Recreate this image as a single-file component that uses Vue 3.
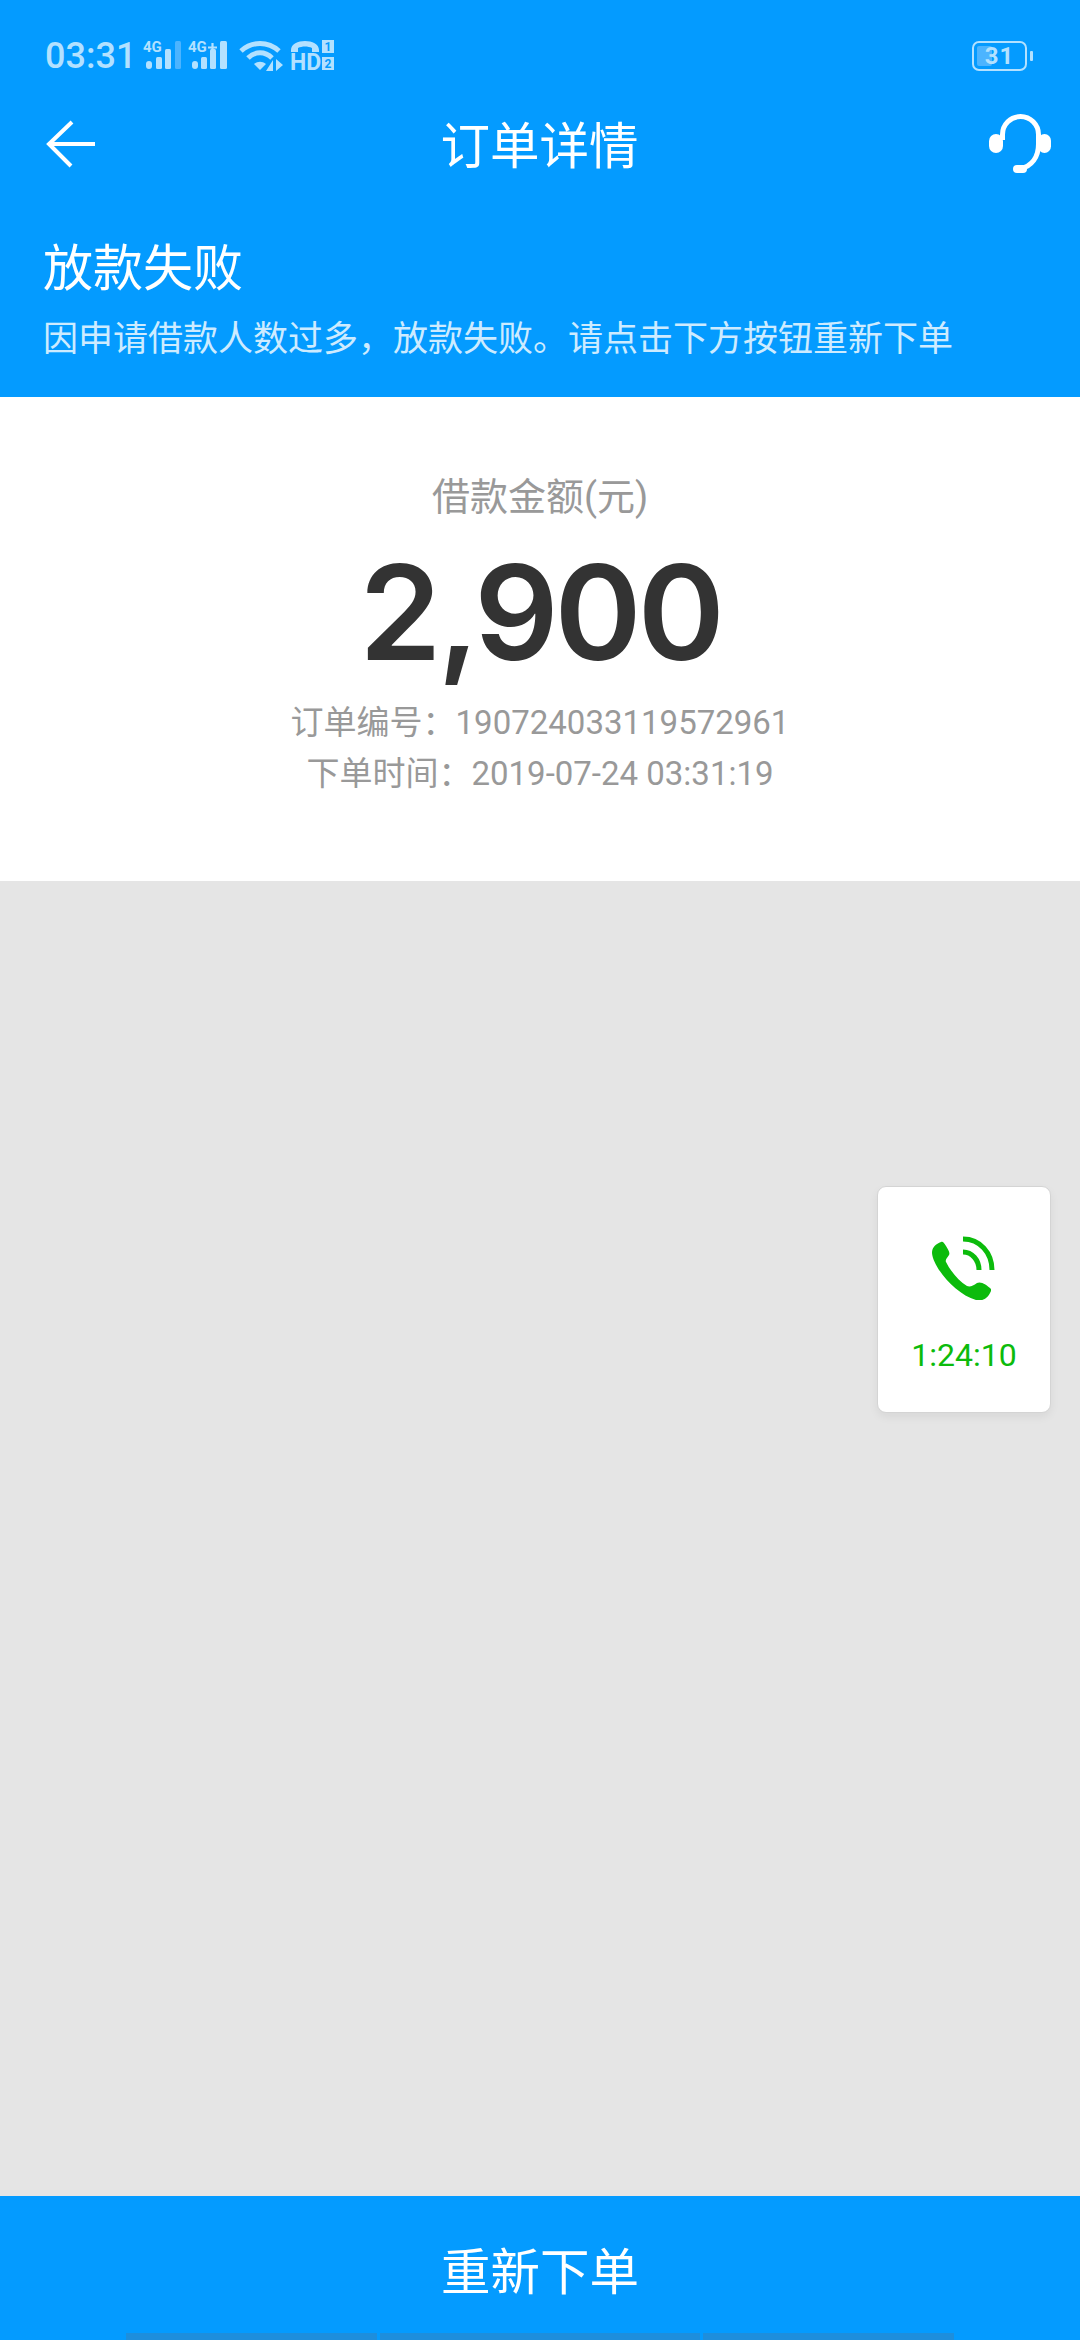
<template>
  <div class="page">
    <header class="top">
      <div class="status-bar">
        <span class="time">03:31</span>
        <svg class="signal" width="40" height="30" viewBox="0 0 40 30">
          <text x="0" y="11" class="net">4G</text>
          <rect x="3" y="20" width="6" height="8" rx="3" fill="#b3e1ff" />
          <rect x="13" y="16" width="6" height="12" rx="1.5" fill="#b3e1ff" />
          <rect x="22" y="8" width="6" height="20" rx="1.5" fill="#b3e1ff" />
          <rect x="32" y="0" width="6" height="28" rx="1.5" fill="#4cb4ff" />
        </svg>
        <svg class="signal" width="42" height="30" viewBox="0 0 42 30">
          <text x="0" y="11" class="net">4G</text>
          <path d="M20 6.5h9M24.5 2v9" stroke="#b3e1ff" stroke-width="2.2" />
          <rect x="4" y="20" width="6" height="8" rx="3" fill="#b3e1ff" />
          <rect x="13" y="16" width="6" height="12" rx="1.5" fill="#b3e1ff" />
          <rect x="22" y="8" width="6" height="20" rx="1.5" fill="#b3e1ff" />
          <rect x="32" y="0" width="7" height="28" rx="1.5" fill="#b3e1ff" />
        </svg>
        <svg class="wifi" width="44" height="30" viewBox="0 0 44 30">
          <path d="M1 10C12 0 28 0 39 10" fill="none" stroke="#b3e1ff" stroke-width="5" />
          <path d="M8 17C15 10 25 10 32 17" fill="none" stroke="#b3e1ff" stroke-width="5" />
          <path d="M14 23C18 20 22 20 26 23L20 29Z" fill="#b3e1ff" />
          <path d="M33 19V30H26ZM36 18L43 24L36 30Z" fill="#b3e1ff" />
        </svg>
        <svg class="hd" width="46" height="32" viewBox="0 0 46 32">
          <path d="M1 10C1 -2 29 -2 29 10V12H22V8C18 6 12 6 8 8V12H1Z" fill="#b3e1ff" />
          <text x="0" y="30" class="hd-text">HD</text>
          <rect x="32" y="0" width="12" height="13" fill="#b3e1ff" />
          <rect x="32" y="17" width="12" height="13" fill="#b3e1ff" />
          <text x="38" y="11" class="sim">1</text>
          <text x="38" y="28" class="sim">2</text>
        </svg>
        <div class="battery">
          <span class="battery-fill"></span>
          <span class="battery-num">31</span>
          <span class="battery-tip"></span>
        </div>
      </div>

      <div class="nav">
        <svg width="50" height="48" viewBox="0 0 50 48">
          <path d="M49 24H3M26 2L3 24L25 46" fill="none" stroke="#fff" stroke-width="4" />
        </svg>
        <h1 class="title">订单详情</h1>
        <svg width="62" height="60" viewBox="0 0 62 60">
          <path d="M13.5 26V20.5A18 18 0 0 1 49.5 20.5V30C49.5 43 43 52 31 55" fill="none" stroke="#fff" stroke-width="5" />
          <rect x="0" y="20" width="14" height="19" rx="7" fill="#fff" />
          <rect x="49" y="20" width="13" height="19" rx="6.5" fill="#fff" />
          <rect x="24" y="51" width="14" height="8" rx="4" fill="#fff" />
        </svg>
      </div>

      <div class="result">
        <div class="result-title">放款失败</div>
        <div class="result-desc">因申请借款人数过多&#xFF0C;放款失败。请点击下方按钮重新下单</div>
      </div>
    </header>

    <section class="summary">
      <div class="amount-label">借款金额(元)</div>
      <div class="amount">2,900</div>
      <div class="meta">订单编号&#xFF1A;190724033119572961</div>
      <div class="meta">下单时间&#xFF1A;2019-07-24 03:31:19</div>
    </section>

    <main class="body"></main>

    <button class="reorder">重新下单</button>

    <aside class="call-card">
      <svg width="64" height="64" viewBox="0 0 64 64">
        <path d="M9 6C4 8 0 11 0 17C1 31 23 58 44 64C50 65 55 64 59 55L59 53C55 49 49 45 45 47C41 50 38 51 35 50C27 45 19 36 14 26C13 24 15 22 17 19C18 17 17 15 14 10C12 7 11 5 9 6Z" fill="#0cbb0c" />
        <path d="M31 16C40 16 47 24 47 34" fill="none" stroke="#0cbb0c" stroke-width="5" />
        <path d="M31 3C48 3 60 17 60 34" fill="none" stroke="#0cbb0c" stroke-width="5" />
      </svg>
      <span class="call-time">1:24:10</span>
    </aside>

    <div class="nav-hint">
      <span class="hint-a"></span>
      <span class="hint-b"></span>
      <span class="hint-a"></span>
    </div>
  </div>
</template>

<script setup>
</script>

<style>
html,
body {
  margin: 0;
  background: #e5e5e5;
}
</style>

<style scoped>
.page {
  position: relative;
  display: flex;
  flex-direction: column;
  width: 1080px;
  height: 2340px;
  overflow: hidden;
  background: #e5e5e5;
  font-family: Roboto, "Noto Sans CJK SC", sans-serif;
}

.top {
  height: 397px;
  box-sizing: border-box;
  padding-top: 38px;
  background: #049bff;
  color: #fff;
}

.status-bar {
  display: flex;
  align-items: center;
  height: 36px;
  padding-left: 45px;
  padding-right: 46px;
}

.status-bar svg {
  overflow: visible;
}

.time {
  margin-right: 7px;
  color: #b3e1ff;
  font-size: 36px;
  font-weight: 500;
  line-height: 36px;
}

.signal {
  margin-right: 5px;
}

.wifi {
  margin-left: 5px;
  margin-right: 6px;
}

.net {
  fill: #b3e1ff;
  font-size: 15px;
  font-weight: 700;
}

.hd-text {
  fill: #b3e1ff;
  font-size: 23px;
  font-weight: 700;
}

.sim {
  fill: #049bff;
  font-size: 12px;
  font-weight: 700;
  text-anchor: middle;
}

.battery {
  position: relative;
  display: flex;
  align-items: center;
  justify-content: center;
  box-sizing: border-box;
  width: 55px;
  height: 30px;
  margin-left: auto;
  margin-right: 7px;
  border: 2px solid #b3e1ff;
  border-radius: 7px;
}

.battery-fill {
  position: absolute;
  top: 3px;
  bottom: 3px;
  left: 3px;
  width: 15px;
  border-radius: 2px;
  background: #4cb4ff;
}

.battery-num {
  position: relative;
  color: #b3e1ff;
  font-size: 24px;
  font-weight: 700;
  letter-spacing: 1px;
}

.battery-tip {
  position: absolute;
  top: 8px;
  right: -8px;
  width: 3px;
  height: 10px;
  border-radius: 1px;
  background: #b3e1ff;
}

.nav {
  display: flex;
  align-items: center;
  justify-content: space-between;
  height: 60px;
  margin-top: 40px;
  padding: 0 29px 0 46px;
}

.title {
  margin: 6px 6px 0 0;
  font-size: 49.5px;
  font-weight: 400;
  line-height: 60px;
}

.result {
  margin-top: 66px;
  padding-left: 43px;
}

.result-title {
  font-size: 50px;
  line-height: 58px;
}

.result-desc {
  margin-top: 19px;
  color: #cdebff;
  font-size: 35px;
  line-height: 46px;
}

.summary {
  display: flex;
  flex-direction: column;
  align-items: center;
  height: 484px;
  box-sizing: border-box;
  padding-top: 76px;
  background: #fff;
}

.amount-label {
  color: #999;
  font-size: 38px;
  line-height: 48px;
}

.amount {
  margin-top: 18px;
  margin-bottom: 12px;
  color: #333;
  font-family: Inter, Roboto, sans-serif;
  font-size: 132px;
  font-weight: 600;
  letter-spacing: -4px;
  line-height: 146px;
}

.meta {
  color: #999;
  font-size: 33px;
  line-height: 51px;
}

.body {
  flex: 1;
}

.reorder {
  height: 144px;
  padding: 0;
  border: 0;
  background: #049bff;
  color: #fff;
  font-family: inherit;
  font-size: 49.5px;
}

.call-card {
  position: absolute;
  top: 1186px;
  left: 877px;
  display: flex;
  flex-direction: column;
  align-items: center;
  box-sizing: border-box;
  width: 174px;
  height: 227px;
  padding-top: 49px;
  border: 1px solid #d4d4d4;
  border-radius: 9px;
  background: #fff;
  box-shadow: 0 4px 10px rgba(0, 0, 0, 0.06);
}

.call-time {
  margin-top: 36px;
  color: #0cbb0c;
  font-size: 32px;
  line-height: 38px;
}

.nav-hint {
  position: absolute;
  bottom: 0;
  left: 126px;
  display: flex;
  gap: 3px;
}

.nav-hint span {
  height: 7px;
  background: #1e8edc;
}

.hint-a {
  width: 251px;
}

.hint-b {
  width: 320px;
}
</style>
